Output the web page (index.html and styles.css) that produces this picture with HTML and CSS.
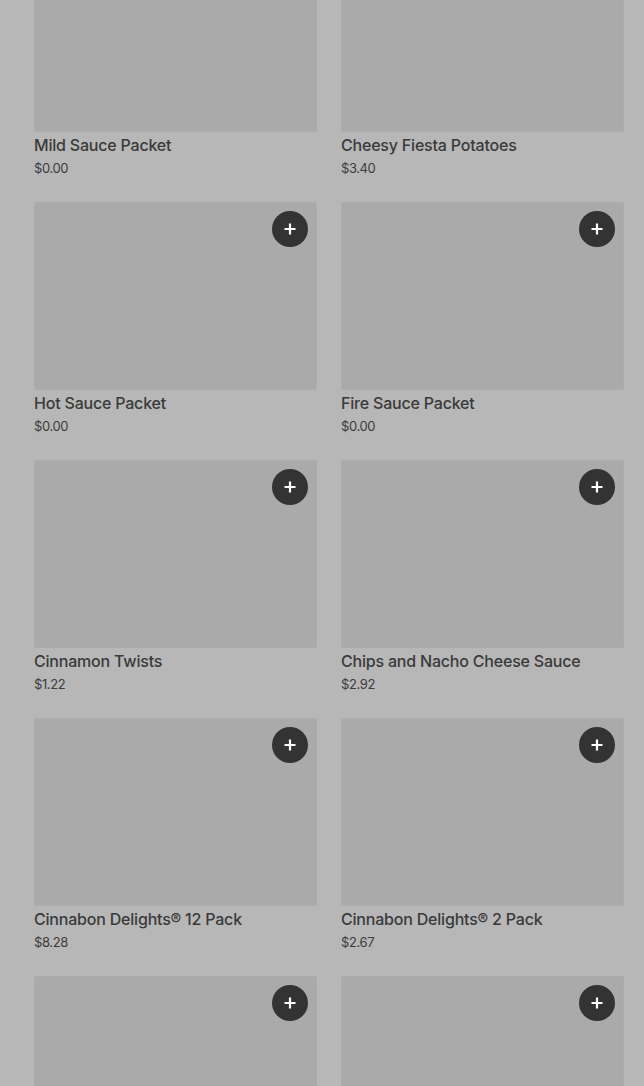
FILE: index.html
```html
<!DOCTYPE html>
<html>
<head>
<meta charset="utf-8">
<link rel="stylesheet" href="styles.css">
</head>
<body>
<div class="grid">
  <div class="card"><div class="thumb"></div><div class="name">Mild Sauce Packet</div><div class="price">$0.00</div></div>
  <div class="card"><div class="thumb"></div><div class="name">Cheesy Fiesta Potatoes</div><div class="price">$3.40</div></div>
  <div class="card"><div class="thumb"><button class="add"><svg width="14" height="14" viewBox="0 0 14 14"><path d="M7 1.5v11M1.5 7h11" stroke="#fff" stroke-width="2.2"/></svg></button></div><div class="name">Hot Sauce Packet</div><div class="price">$0.00</div></div>
  <div class="card"><div class="thumb"><button class="add"><svg width="14" height="14" viewBox="0 0 14 14"><path d="M7 1.5v11M1.5 7h11" stroke="#fff" stroke-width="2.2"/></svg></button></div><div class="name">Fire Sauce Packet</div><div class="price">$0.00</div></div>
  <div class="card"><div class="thumb"><button class="add"><svg width="14" height="14" viewBox="0 0 14 14"><path d="M7 1.5v11M1.5 7h11" stroke="#fff" stroke-width="2.2"/></svg></button></div><div class="name">Cinnamon Twists</div><div class="price">$1.22</div></div>
  <div class="card"><div class="thumb"><button class="add"><svg width="14" height="14" viewBox="0 0 14 14"><path d="M7 1.5v11M1.5 7h11" stroke="#fff" stroke-width="2.2"/></svg></button></div><div class="name">Chips and Nacho Cheese Sauce</div><div class="price">$2.92</div></div>
  <div class="card"><div class="thumb"><button class="add"><svg width="14" height="14" viewBox="0 0 14 14"><path d="M7 1.5v11M1.5 7h11" stroke="#fff" stroke-width="2.2"/></svg></button></div><div class="name">Cinnabon Delights® 12 Pack</div><div class="price">$8.28</div></div>
  <div class="card"><div class="thumb"><button class="add"><svg width="14" height="14" viewBox="0 0 14 14"><path d="M7 1.5v11M1.5 7h11" stroke="#fff" stroke-width="2.2"/></svg></button></div><div class="name">Cinnabon Delights® 2 Pack</div><div class="price">$2.67</div></div>
  <div class="card"><div class="thumb"><button class="add"><svg width="14" height="14" viewBox="0 0 14 14"><path d="M7 1.5v11M1.5 7h11" stroke="#fff" stroke-width="2.2"/></svg></button></div><div class="name">&nbsp;</div><div class="price">&nbsp;</div></div>
  <div class="card"><div class="thumb"><button class="add"><svg width="14" height="14" viewBox="0 0 14 14"><path d="M7 1.5v11M1.5 7h11" stroke="#fff" stroke-width="2.2"/></svg></button></div><div class="name">&nbsp;</div><div class="price">&nbsp;</div></div>
</div>
</body>
</html>
```
FILE: styles.css
```css
html, body {
  margin: 0;
  padding: 0;
  background: #b7b7b7;
  overflow: hidden;
  height: 1086px;
}
body {
  font-family: Inter, "Liberation Sans", sans-serif;
  color: #383838;
}
.grid {
  display: grid;
  grid-template-columns: 283px 283px;
  column-gap: 24px;
  padding-left: 34px;
  margin-top: -56px;
}
.card {
  margin-bottom: 25px;
}
.thumb {
  position: relative;
  height: 188px;
  background: #aaaaaa;
  box-shadow: inset 0 0 0 1px #adadad;
}
.add {
  position: absolute;
  top: 9px;
  right: 9px;
  width: 36px;
  height: 36px;
  border-radius: 50%;
  border: none;
  padding: 0;
  background: #333333;
  display: flex;
  align-items: center;
  justify-content: center;
}
.add svg { display: block; }
.name {
  margin-top: 1px;
  font-size: 16px;
  font-weight: 500;
  line-height: 24px;
  letter-spacing: -0.2px;
  white-space: nowrap;
  color: #3a3a3a;
}
.price {
  margin-top: 2px;
  font-size: 13px;
  line-height: 18px;
  color: #3c3c3c;
  letter-spacing: -0.4px;
}
```
